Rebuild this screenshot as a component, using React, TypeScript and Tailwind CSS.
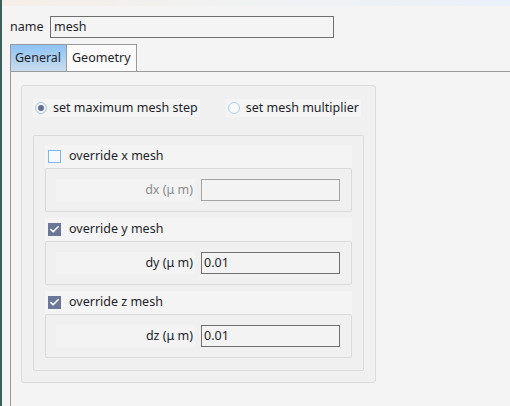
import { Check } from 'lucide-react'

const font = { fontFamily: '"Noto Sans", "Open Sans", sans-serif' }

type AxisProps = {
    axis: string
    checked: boolean
    value: string
}

const AxisBlock = ({ axis, checked, value }: AxisProps) => {
    return (
        <div className="flex flex-col">
            <div className="h-[23px] flex items-center bg-[#f4f4f4] pl-[3px]">
                {checked ? (
                    <div className="w-[13px] h-[13px] bg-[#6b7797] flex items-center justify-center">
                        <Check size={11} strokeWidth={3.5} className="text-white" />
                    </div>
                ) : (
                    <div className="w-[13px] h-[13px] border border-[#7db9ef] bg-[#f7f9fb]" />
                )}
                <span className="ml-[8px] text-[12.5px] text-[#1f1f2a] whitespace-nowrap">override {axis} mesh</span>
            </div>
            <div className="h-[44px] border border-[#dadada] rounded-[2px] bg-[#f0f0f0] flex items-center justify-end pr-[11px]">
                <div className="w-[139px] h-[22px] bg-[#f3f3f3] flex items-center justify-end pr-[2px]">
                    <span className={`text-[12.5px] whitespace-nowrap ${checked ? 'text-[#1f1f2a]' : 'text-[#8c8c8c]'}`}>
                        d{axis} (μ m)
                    </span>
                </div>
                <div className={`ml-[6px] w-[139px] h-[22px] border flex items-center px-[2px] text-[12.5px] text-[#1f1f2a] bg-[#f3f3f3] ${checked ? 'border-[#707070]' : 'border-[#a3a3a3]'}`}>
                    {value}
                </div>
            </div>
        </div>
    )
}

const App = () => {
    return (
        <div className="w-[510px] h-[406px] overflow-hidden flex bg-[#f4f4f4]" style={font}>
            <div className="w-[2px] h-full bg-[#3d5f5a]" />
            <div className="flex-1 flex flex-col">
                <div className="h-[6px] bg-gradient-to-r from-[#f6eee8] via-[#eff2f2] to-[#ebf1f9]" />
                <div className="mt-[10px] flex items-center pl-[8px]">
                    <span className="w-[40px] text-[12.5px] text-[#1f1f2a]">name</span>
                    <div className="w-[284px] h-[22px] border border-[#6e6e6e] bg-[#f4f4f4] flex items-center px-[3px] text-[12.5px] text-[#1f1f2a]">
                        mesh
                    </div>
                </div>
                <div className="mt-[6px] ml-[8px] flex h-[27px]">
                    <div className="w-[57px] border border-b-0 border-[#9a9a9a] bg-gradient-to-b from-[#8cc3f5] to-[#c9dcec] flex items-center pl-[4px] text-[12.5px] text-[#1f1f2a]">
                        General
                    </div>
                    <div className="w-[70px] border border-b-0 border-l-0 border-[#9a9a9a] bg-[#fafafa] flex items-center pl-[5px] text-[12.5px] text-[#1f1f2a]">
                        Geometry
                    </div>
                </div>
                <div className="flex-1 ml-[8px] border-t border-l border-[#9a9a9a] pl-[10px] pt-[13px]">
                    <div className="w-[355px] h-[298px] border border-[#dadada] rounded-[3px] bg-[#f0f0f0] px-[11px] pt-[13px]">
                        <div className="flex items-center h-[18px]">
                            <div className="shrink-0 flex items-center bg-[#f4f4f4] pl-[2px] pr-[2px] h-[18px]">
                                <div className="w-[12px] h-[12px] rounded-full border border-[#b3c4d8] bg-[#eef2f7] flex items-center justify-center">
                                    <div className="w-[6px] h-[6px] rounded-full bg-[#657090]" />
                                </div>
                                <span className="ml-[6px] text-[12.5px] text-[#1f1f2a] whitespace-nowrap">set maximum mesh step</span>
                            </div>
                            <div className="shrink-0 ml-[26px] flex items-center bg-[#f4f4f4] pl-[2px] pr-[2px] h-[18px]">
                                <div className="w-[12px] h-[12px] rounded-full border border-[#a8cdee] bg-[#f7f9fb]" />
                                <span className="ml-[6px] text-[12.5px] text-[#1f1f2a] whitespace-nowrap">set mesh multiplier</span>
                            </div>
                        </div>
                        <div className="mt-[18px] w-[331px] h-[236px] border border-[#dadada] rounded-[2px] bg-[#f0f0f0] px-[11px] pt-[9px] flex flex-col gap-[6px]">
                            <AxisBlock axis="x" checked={false} value="" />
                            <AxisBlock axis="y" checked={true} value="0.01" />
                            <AxisBlock axis="z" checked={true} value="0.01" />
                        </div>
                    </div>
                </div>
            </div>
        </div>
    )
}

export default App
